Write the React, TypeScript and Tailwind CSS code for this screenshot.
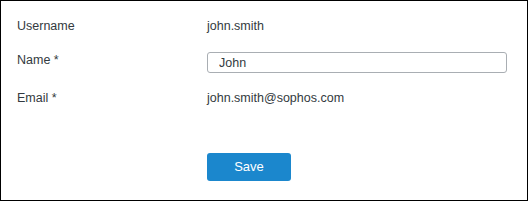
import { useState } from 'react';

export default function App() {
    const [name, setName] = useState('John');

    return (
        <div className="w-[528px] h-[201px] border border-black bg-white pl-[16px] pt-[15px] text-[12.5px] text-[#333a40] font-['Liberation_Sans',Arial,sans-serif]">
            {/* Username */}
            <div className="flex leading-5">
                <div className="w-[190px]">Username</div>
                <div>john.smith</div>
            </div>

            {/* Name */}
            <div className="flex mt-[14px]">
                <div className="w-[190px] leading-5">Name *</div>
                <input
                    value={name}
                    onChange={(e) => setName(e.target.value)}
                    className="mt-[2px] h-[21px] w-[300px] rounded-[3px] border border-[#a9aeb3] pl-[11px] text-[12.5px] text-[#333a40] outline-none"
                />
            </div>

            {/* Email */}
            <div className="flex mt-[15px] leading-5">
                <div className="w-[190px]">Email *</div>
                <div>john.smith@sophos.com</div>
            </div>

            <div className="flex mt-[45px]">
                <div className="w-[190px]" />
                <button className="h-[28px] w-[84px] rounded-[3px] bg-[#1b87cd] text-[13px] text-white">
                    Save
                </button>
            </div>
        </div>
    );
}
